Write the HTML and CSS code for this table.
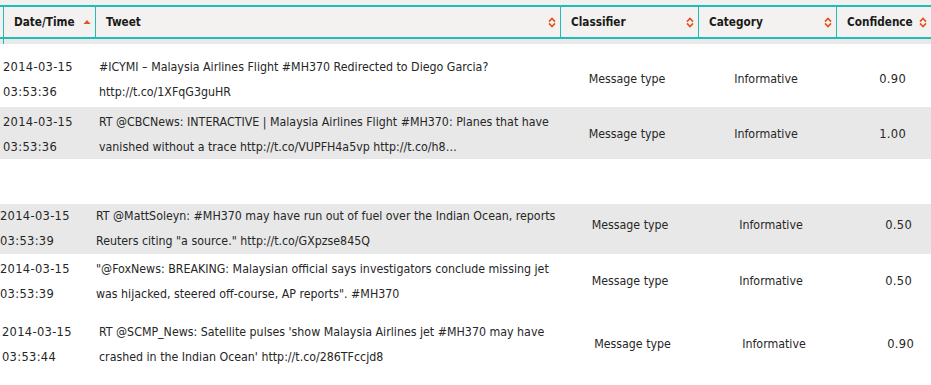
FILE: index.html
```html
<!DOCTYPE html>
<html lang="en">
<head>
<meta charset="utf-8">
<title>Tweets</title>
<link rel="stylesheet" href="styles.css">
</head>
<body>
<div class="sheet">
  <div class="cap"></div>
  <div class="thead">
    <div class="th c-date"><span>Date/Time</span><svg class="ico" width="8" height="6" viewBox="0 0 8 6"><path d="M0.5 5 L4 1 L7.5 5 Z" fill="#e5501f"/></svg></div>
    <div class="th c-tweet"><span>Tweet</span><svg class="ico" width="8" height="11" viewBox="0 0 8 11"><path d="M1 4.6 L4 1.4 L7 4.6 M1 6.4 L4 9.6 L7 6.4" fill="none" stroke="#e5501f" stroke-width="1.6"/></svg></div>
    <div class="th c-cls"><span>Classifier</span><svg class="ico" width="8" height="11" viewBox="0 0 8 11"><path d="M1 4.6 L4 1.4 L7 4.6 M1 6.4 L4 9.6 L7 6.4" fill="none" stroke="#e5501f" stroke-width="1.6"/></svg></div>
    <div class="th c-cat"><span>Category</span><svg class="ico" width="8" height="11" viewBox="0 0 8 11"><path d="M1 4.6 L4 1.4 L7 4.6 M1 6.4 L4 9.6 L7 6.4" fill="none" stroke="#e5501f" stroke-width="1.6"/></svg></div>
    <div class="th c-conf"><span>Confidence</span><svg class="ico" width="8" height="11" viewBox="0 0 8 11"><path d="M1 4.6 L4 1.4 L7 4.6 M1 6.4 L4 9.6 L7 6.4" fill="none" stroke="#e5501f" stroke-width="1.6"/></svg></div>
  </div>
  <div class="band"></div>

  <div class="group g1">
    <div class="row r1">
      <div class="num">2014-03-15<br>03:53:36</div>
      <div class="tweet">#ICYMI – Malaysia Airlines Flight #MH370 Redirected to Diego Garcia?<br>http://t.co/1XFqG3guHR</div>
      <div class="mid cls">Message type</div>
      <div class="mid cat">Informative</div>
      <div class="mid conf num">0.90</div>
    </div>
    <div class="row r2 shade">
      <div class="num">2014-03-15<br>03:53:36</div>
      <div class="tweet">RT @CBCNews: INTERACTIVE | Malaysia Airlines Flight #MH370: Planes that have<br>vanished without a trace http://t.co/VUPFH4a5vp http://t.co/h8…</div>
      <div class="mid cls">Message type</div>
      <div class="mid cat">Informative</div>
      <div class="mid conf num">1.00</div>
    </div>
  </div>

  <div class="group g2">
    <div class="row r3 shade">
      <div class="num">2014-03-15<br>03:53:39</div>
      <div class="tweet">RT @MattSoleyn: #MH370 may have run out of fuel over the Indian Ocean, reports<br>Reuters citing "a source." http://t.co/GXpzse845Q</div>
      <div class="mid cls">Message type</div>
      <div class="mid cat">Informative</div>
      <div class="mid conf num">0.50</div>
    </div>
    <div class="row r4">
      <div class="num">2014-03-15<br>03:53:39</div>
      <div class="tweet">"@FoxNews: BREAKING: Malaysian official says investigators conclude missing jet<br>was hijacked, steered off-course, AP reports". #MH370</div>
      <div class="mid cls">Message type</div>
      <div class="mid cat">Informative</div>
      <div class="mid conf num">0.50</div>
    </div>
  </div>

  <div class="group g3">
    <div class="row r5">
      <div class="num">2014-03-15<br>03:53:44</div>
      <div class="tweet">RT @SCMP_News: Satellite pulses 'show Malaysia Airlines jet #MH370 may have<br>crashed in the Indian Ocean' http://t.co/286TFccjd8</div>
      <div class="mid cls">Message type</div>
      <div class="mid cat">Informative</div>
      <div class="mid conf num">0.90</div>
    </div>
  </div>
</div>
</body>
</html>
```

FILE: styles.css
```css
html, body {
  margin: 0;
  padding: 0;
  background: #ffffff;
}

body {
  font-family: "DejaVu Sans Condensed", "DejaVu Sans", sans-serif;
  font-stretch: condensed;
  font-size: 12.3px;
  color: #262626;
}

.sheet {
  width: 931px;
}

.cap {
  height: 5px;
  background: #f1f0ee;
}

.thead {
  display: flex;
  height: 30px;
  padding-left: 3px;
  background: #f3f2f0;
  border-top: 2px solid #1fbdb5;
  border-bottom: 2px solid #1fbdb5;
}

.th {
  box-sizing: border-box;
  display: flex;
  align-items: center;
  justify-content: space-between;
  padding: 0 4px 0 10px;
  border-right: 1px solid #1fbdb5;
  font-weight: bold;
  color: #1a1a1a;
  font-size: 11.7px;
}

.ico {
  display: block;
  flex: none;
}

.c-date {
  width: 93px;
  border-left: 1px solid #1fbdb5;
}

.c-tweet {
  width: 465px;
}

.c-cls,
.c-cat {
  width: 138px;
}

.c-conf {
  flex: 1;
  border-right: none;
  padding-right: 4px;
}

.band {
  height: 5px;
  padding-left: 3px;
  background: #e9e9e9;
}

.band::before {
  content: "";
  display: block;
  width: 1px;
  height: 100%;
  background: #1fbdb5;
}

.row {
  display: grid;
  align-items: center;
  line-height: 24.5px;
  white-space: nowrap;
}

.shade {
  background: #e8e8e8;
}

.num {
  font-family: "DejaVu Sans", sans-serif;
  font-stretch: normal;
  font-size: 11.5px;
  letter-spacing: 0.3px;
}

.cls,
.cat {
  text-align: center;
}

.conf {
  text-align: right;
}

.g1 {
  margin-top: 8px;
}

.g1 .row {
  padding-left: 3px;
  grid-template-columns: 96px 461px 134px 144px 68px;
}

.g2 {
  margin-top: 45px;
}

.g2 .row {
  padding-left: 0;
  grid-template-columns: 96px 466px 136px 146px 68px;
}

.g3 {
  margin-top: 8px;
}

.g3 .row {
  padding-left: 2px;
  grid-template-columns: 97px 465px 137px 146px 67px;
}

.r1 {
  padding: 3px 0 3px;
}

.r2 {
  padding: 3px 0 0;
}

.r3 {
  padding: 0 0 1px;
}

.r3 .mid {
  padding-bottom: 6px;
}

.r4 {
  padding: 3px 0 3px;
}

.r5 {
  padding: 3px 0 3px;
}
```
